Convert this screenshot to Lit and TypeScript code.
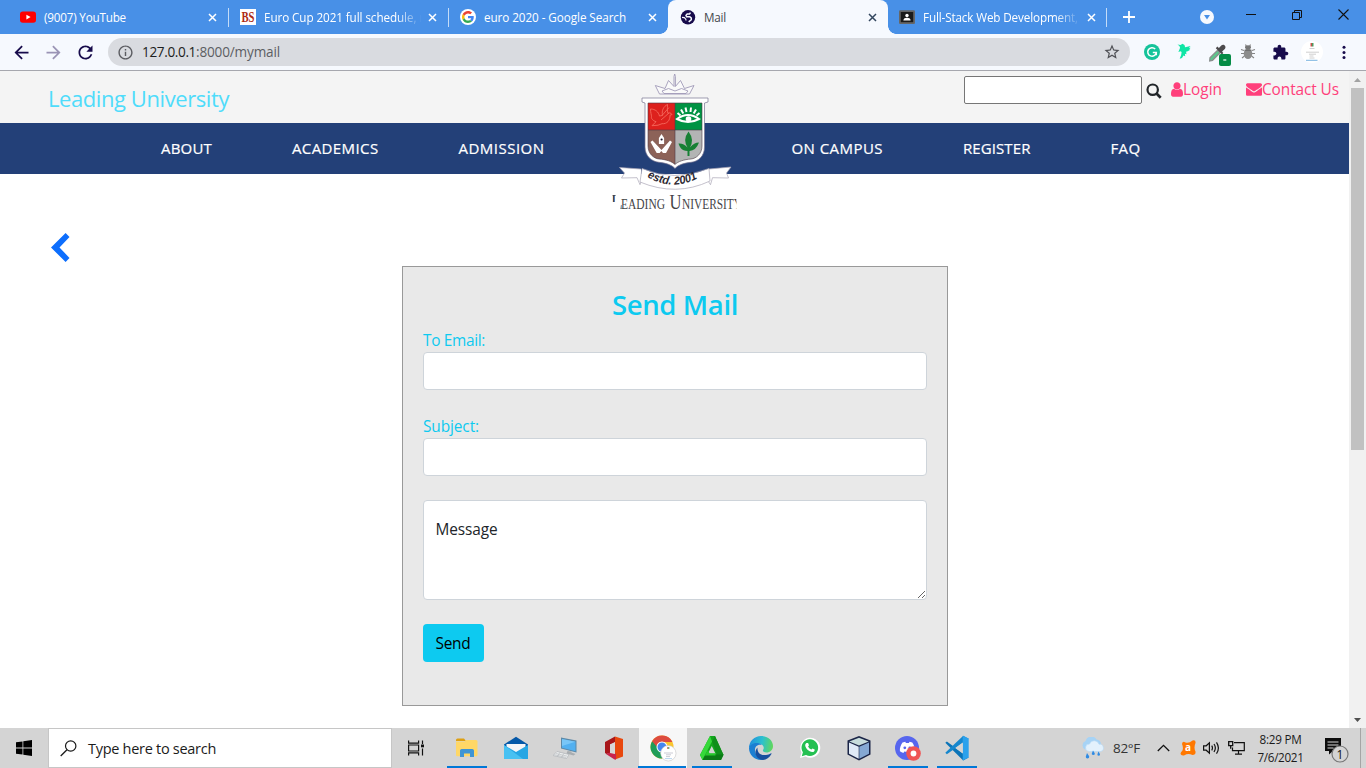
import { LitElement, html, svg, css } from "lit";
import { customElement, property } from "lit/decorators.js";

/** Single-line label whose tracking is adjusted so that it spans `w` pixels. */
@customElement("fit-label")
class FitLabel extends LitElement {
  @property() text = "";
  @property({ type: Number }) w = 0;

  static styles = css`
    :host { display: inline-block; white-space: pre; }
    .t { display: inline-block; }
  `;

  updated() {
    const el = this.renderRoot.querySelector(".t") as HTMLElement;
    el.style.letterSpacing = "0px";
    if (this.w) {
      const natural = el.getBoundingClientRect().width;
      el.style.letterSpacing = `${(this.w - natural) / this.text.length}px`;
    }
  }

  render() {
    return html`<span class="t">${this.text}</span>`;
  }
}

const icon = (w: number, h: number, box: string, body: unknown) =>
  html`<svg width=${w} height=${h} viewBox=${box} fill="none">${body}</svg>`;

const closeX = (c: string) =>
  icon(9, 9, "0 0 9 9", svg`<path d="M1 1l7 7M8 1l-7 7" stroke=${c} stroke-width="1.5"/>`);

/* ---------- tab icons ---------- */
const youtube = icon(16, 16, "0 0 16 16", svg`
  <rect x="0" y="2.4" width="16" height="11.4" rx="2.8" fill="#f00"/>
  <path d="M6.4 5.7l4.2 2.4-4.2 2.4z" fill="#fff"/>`);
const bs = icon(16, 16, "0 0 16 16", svg`
  <rect width="16" height="16" fill="#fff"/>
  <text x="8" y="13" text-anchor="middle" textLength="13" lengthAdjust="spacingAndGlyphs" font-family="Liberation Serif, serif" font-weight="700" font-size="14" fill="#ad2a14">BS</text>`);
const google = icon(16, 16, "0 0 48 48", svg`
  <circle cx="24" cy="24" r="24" fill="#fff"/>
  <g transform="translate(6 6) scale(.75)">
  <path fill="#EA4335" d="M24 9.5c3.54 0 6.71 1.22 9.21 3.6l6.85-6.85C35.9 2.38 30.47 0 24 0 14.62 0 6.51 5.38 2.56 13.22l7.98 6.19C12.43 13.72 17.74 9.5 24 9.5z"/>
  <path fill="#4285F4" d="M46.98 24.55c0-1.57-.15-3.09-.38-4.55H24v9.02h12.94c-.58 2.96-2.26 5.48-4.78 7.18l7.73 6c4.51-4.18 7.09-10.36 7.09-17.65z"/>
  <path fill="#FBBC05" d="M10.53 28.59c-.48-1.45-.76-2.99-.76-4.59s.27-3.14.76-4.59l-7.98-6.19C.92 16.46 0 20.12 0 24c0 3.88.92 7.54 2.56 10.78l7.97-6.19z"/>
  <path fill="#34A853" d="M24 48c6.48 0 11.93-2.13 15.89-5.81l-7.73-6c-2.15 1.45-4.92 2.3-8.16 2.3-6.26 0-11.57-4.22-13.47-9.91l-7.98 6.19C6.51 42.62 14.62 48 24 48z"/></g>`);
const globe = icon(16, 16, "0 0 16 16", svg`
  <circle cx="8" cy="8.3" r="7.2" fill="#170b4b"/>
  <path d="M10.500 3.600L9.500 5H7.200L6 6.300l.6 1.400h3.200l1.500 1.400v1.600l-2.600 2.200" stroke="#f6f9fe" stroke-width="1.500"/>
  <path d="M2 8.300l2.300.3 1.500 1.600.2 1.300" stroke="#f6f9fe" stroke-width="1.200"/>`);
const classroom = icon(16, 16, "0 0 16 16", svg`
  <rect x="0" y="1.3" width="16" height="13.7" rx="1.3" fill="#666"/>
  <rect x="1.8" y="3" width="12.4" height="10.2" fill="#1b1b1b"/>
  <circle cx="8" cy="6.5" r="1.7" fill="#fff"/><path d="M4.4 11.6c0-2.1 1.7-2.8 3.6-2.8s3.6.7 3.6 2.8z" fill="#fff"/>`);

/* ---------- toolbar icons ---------- */
const NAVY = "#170b4b";
const mat = (d: string, c: string, s = 20) =>
  icon(s, s, "0 0 24 24", svg`<path d=${d} fill=${c}/>`);
const backArrow = mat("M20 11H7.83l5.59-5.59L12 4l-8 8 8 8 1.41-1.41L7.83 13H20v-2z", NAVY, 21);
const fwdArrow = mat("M12 4l-1.41 1.41L16.17 11H4v2h12.17l-5.58 5.59L12 20l8-8z", "#9a94b5", 21);
const reload = mat("M17.65 6.35C16.2 4.9 14.21 4 12 4c-4.42 0-7.99 3.58-7.99 8s3.57 8 7.99 8c3.73 0 6.84-2.55 7.73-6h-2.08c-.82 2.33-3.04 4-5.65 4-3.31 0-6-2.69-6-6s2.69-6 6-6c1.66 0 3.14.69 4.22 1.78L13 11h7V4l-2.35 2.35z", NAVY, 21);
const info = mat("M11 7h2v2h-2zm0 4h2v6h-2zm1-9C6.48 2 2 6.48 2 12s4.48 10 10 10 10-4.48 10-10S17.52 2 12 2zm0 18c-4.41 0-8-3.59-8-8s3.59-8 8-8 8 3.59 8 8-3.59 8-8 8z", "#5b5c61", 17);
const star = mat("M22 9.24l-7.19-.62L12 2 9.19 8.63 2 9.24l5.46 4.73L5.82 21 12 17.27 18.18 21l-1.63-7.03L22 9.24zM12 15.4l-3.76 2.27 1-4.28-3.32-2.88 4.38-.38L12 6.1l1.71 4.04 4.38.38-3.32 2.88 1 4.28L12 15.4z", "#4f5055", 18);
const puzzle = mat("M20.5 11H19V7c0-1.1-.9-2-2-2h-4V3.5C13 2.12 11.88 1 10.5 1S8 2.12 8 3.5V5H4c-1.1 0-1.99.9-1.99 2v3.8H3.5c1.49 0 2.7 1.21 2.7 2.7s-1.21 2.7-2.7 2.7H2V20c0 1.1.9 2 2 2h3.8v-1.5c0-1.49 1.21-2.7 2.7-2.7 1.49 0 2.7 1.21 2.7 2.7V22H17c1.1 0 2-.9 2-2v-4h1.5c1.38 0 2.5-1.12 2.5-2.5S21.88 11 20.5 11z", NAVY, 17);
const grammarly = icon(16, 16, "0 0 16 16", svg`
  <circle cx="8" cy="8" r="8" fill="#15c39a"/>
  <path d="M11.2 5a4.3 4.3 0 1 0 1.1 3.6H8.8M12.3 8.6v2.7" stroke="#fff" stroke-width="1.5"/>`);
const bird = icon(16, 18, "0 0 16 18", svg`
  <path d="M1.500 1.500l3 .5L6.500 .8l2 1.200 .6 2.300L14.500 3l-1.600 2 1.700-.3-1.500 1.900 1.200 .1-2.600 1.600-1.600 .4 .4 2.600-1.600-.6 .3 2.600-1.700-.9-1.500 2.600-2.300 .8 1.500-3.700 .4-3L4.500 8.300l-2.100 .6 1.700-4.200L3.400 3z" fill="#10e5a5"/>`);
const dropper = icon(26, 24, "0 0 26 24", svg`
  <path d="M5 15.800L12.500 8.300l2.500 2.500-7.500 7.500-2.800 .7z" fill="#5cc88d" stroke="#8a8f8e" stroke-width="1.300"/>
  <path d="M10.800 6.200l6.200 6.200 1.300-1.500-1.200-1.300 2.700-2.700c2.200-2.400-1.200-5.600-3.500-3.400L13.900 6l-1.600-1.400z" fill="#4d4b4d"/>
  <rect x="14" y="12" width="12" height="12" rx="2" fill="#058c46"/>
  <path d="M18.300 18h3" stroke="#fff" stroke-width="1.200"/>`);
const bug = icon(16, 18, "0 0 16 18", svg`
  <path d="M1 6.500l3 1M1 10.500h3M2 15l2.500-2M15 6.500l-3 1M15 10.500h-3M14 15l-2.500-2M5.500 1.500l1 2M10.500 1.500l-1 2" stroke="#858585" stroke-width="1.1"/>
  <ellipse cx="8" cy="10.700" rx="4.300" ry="5.200" fill="#8c8c8c"/><ellipse cx="8" cy="4.300" rx="3" ry="2" fill="#777"/>
  <path d="M4.500 7.200h7" stroke="#666"/>`);
const avatar = icon(22, 22, "0 0 22 22", svg`
  <circle cx="11" cy="11" r="11" fill="#fff"/>
  <path d="M9.500 2h1.600v3.500H9.500z" fill="#c8504a"/><path d="M11 2h1.500v3.500H11z" fill="#4b9c62"/>
  <path d="M8.500 7.500h5M5 11.200h13M8 13.200h7M8.500 15h4M8.500 17h5" stroke="#c4c4c4" stroke-width=".8"/>
  <path d="M5 19.300h11.500" stroke="#78b3e0"/>`);
const dots = icon(4, 16, "0 0 4 16", svg`<g fill=${NAVY}><circle cx="2" cy="3.2" r="1.5"/><circle cx="2" cy="8.4" r="1.5"/><circle cx="2" cy="13.600" r="1.5"/></g>`);

/* ---------- site icons ---------- */
const magnifier = icon(16, 16, "0 0 16 16", svg`<circle cx="6.7" cy="6.7" r="5.2" stroke="#212529" stroke-width="2.2"/><path d="M10.500 10.500l4.200 4.200" stroke="#212529" stroke-width="2.7"/>`);
const user = icon(12, 15, "0 100 1280 1600", svg`<path fill="#ff3f7b" d="M1280 1399q0 109-62.5 187t-150.5 78h-854q-88 0-150.5-78t-62.5-187q0-85 8.5-160.5t31.5-152 58.5-131 94-89 134.5-34.5q131 128 313 128t313-128q76 0 134.5 34.5t94 89 58.5 131 31.5 152 8.5 160.5zm-256-887q0 159-112.5 271.5t-271.5 112.5-271.5-112.5-112.5-271.5 112.5-271.5 271.5-112.5 271.5 112.5 112.5 271.5z"/>`);
const envelope = icon(16, 16, "0 0 1792 1792", svg`<path fill="#ff3f7b" d="M1792 710v794q0 66-47 113t-113 47h-1472q-66 0-113-47t-47-113v-794q44 49 101 87 362 246 497 345 57 42 92.5 65.5t94.5 48 110 24.5h2q51 0 110-24.5t94.5-48 92.5-65.5q170-123 498-345 57-39 100-87zm0-294q0 79-49 151t-122 123q-376 261-468 325-10 7-42.5 31t-54 38.5-52 32.5-57.5 27-50 9h-2q-23 0-50-9t-57.5-27-52-32.5-54-38.5-42.5-31q-91-64-262-182.5t-205-142.5q-62-42-117-115.5t-55-136.5q0-78 41.5-130t118.5-52h1472q65 0 112.500 47t47.500 113z"/>`);
const chevron = icon(19, 29, "0 0 19 29", svg`<path d="M14.600 0L18.500 4.100 8.500 14.500 18.500 24.900 14.600 29 0 14.500z" fill="#0d6efd"/>`);

const crest = icon(150, 150, "0 0 150 150", svg`
  <defs>
    <clipPath id="name"><path d="M12.500 127h3.200v9h-3.200zM20.500 124h116v24h-116z"/></clipPath>
    <clipPath id="shield"><path d="M48 37h54v43c0 8-6 12.500-11 13-7 .5-13 2.500-16 5.500-3-3-9-5-16-5.500-5-.5-11-5-11-13z"/></clipPath>
    <path id="arc" d="M47 111q27 15.500 54-.5"/>
  </defs>
  <path d="M59.500 28l-4.200-8.500 9.700 3 3.500-8 5.500 6V10.500L74.700 8l.7 2.500V20.500l5.100-6 4 8 9.500-3-4.500 8.500zM62 25l6.500-2.500L75 25l6.500-2.500L88 25l-2 2.500H64z" fill="#fafafa" stroke="#a09ab8" stroke-width=".9"/>
  <path d="M42 32h66v4l-3.500 1V81c0 9-6 14.500-13.500 15.300-7 .7-13 2.700-16 6.200-3-3.500-9-5.500-16-6.200C51.500 95.500 45 90 45 81V37l-3-1z" fill="#fff" stroke="#77738f" stroke-width=".7"/>
  <g clip-path="url(#shield)">
    <path d="M48 36h27v28H48z" fill="#dd211d"/><path d="M75 36h28v28H75z" fill="#009343"/>
    <path d="M48 64h27v36H48z" fill="#8c6258"/><path d="M75 64h28v36H75z" fill="#b3b4b4"/>
  </g>
  <path d="M48 37h54v43c0 8-6 12.500-11 13-7 .5-13 2.500-16 5.500-3-3-9-5-16-5.500-5-.5-11-5-11-13zM75 37v61M48 64h54" stroke="#4e3b46" stroke-width=".6"/>
  <path d="M50.500 43c5 0 8 3 9 7l3-.5c-1-5 1-9 5-11 0 4-.5 7 .5 9 .7-1 3-1 4 1l-2 .7c.3 5-3 9-8 8.500l-4 1.500-6 .5 4-4c-3-1-5-3-4.500-5 0-2-1-4-1-7.700zM62 49.500l7-8M61 54l8-7" stroke="#f4695c" stroke-width=".9"/>
  <path d="M77 53q11-8 22 0-11 6-22 0z" stroke="#fff" stroke-width="2"/><circle cx="88.500" cy="53" r="2.800" fill="#fff"/>
  <path d="M77.500 47l3 2.500M81 43.500l2.300 4M85.500 41.500l1 4.500M91 41.500l-.5 4.500M96 43.500l-2.300 4M99.500 47l-3 2.500" stroke="#fff" stroke-width="2"/>
  <path d="M61.500 68l2.600 4v6h-5.200v-6zM50.500 76l2-1.500 9 9.500 8.500-9.500 2 1.500-6 11h-3l-1.700-2-1.600 2h-3z" fill="#fff"/><circle cx="61.600" cy="73.500" r="1.100" fill="#20182a"/>
  <path d="M88.500 65.500q6 8 1.500 16 4-5 9-5-3 8-9.500 8.500V90h-2v-5c-6-.3-8-4-9-7.500q5-.5 9 4-5-8 1-16z" fill="#178034"/>
  <path d="M41 103l-21.500-1.500 5 5.500-3 5 15.500-.3 3 7 1-3M109 103l22-2-4.500 6 2 5-16-.3-2 7-2-3" fill="#fff" stroke="#aaa6b6" stroke-width=".7"/>
  <path d="M42 102.500q32 14 67 0l1 12.500q-34 16-70 1z" fill="#fff" stroke="#aaa6b6" stroke-width=".7"/>
  <text font-family="Liberation Sans, sans-serif" font-size="11.5" font-weight="700" font-style="italic" fill="#2e2a32"><textPath href="#arc" textLength="53" lengthAdjust="spacingAndGlyphs">estd. 2001</textPath></text>
  <g clip-path="url(#name)" font-family="Liberation Serif, serif" fill="#444447">
    <text x="10.500" y="142.700" font-size="20">L</text>
    <text x="21" y="142.700" font-size="15" textLength="44" lengthAdjust="spacingAndGlyphs">EADING</text>
    <text x="69.500" y="142.700" font-size="20" textLength="12" lengthAdjust="spacingAndGlyphs">U</text>
    <text x="82" y="142.700" font-size="15" textLength="60" lengthAdjust="spacingAndGlyphs">NIVERSITY</text>
  </g>`);

/* ---------- taskbar icons ---------- */
const winLogo = icon(16, 16, "0 0 16 16", svg`<path fill="#000" d="M0 2.300l6.500-.9v6.200H0zM7.300 1.300L16 0v7.600H7.300zM0 8.400h6.500v6.200L0 13.700zM7.300 8.400H16V16l-8.700-1.300z"/>`);
const loupe = icon(17, 17, "0 0 17 17", svg`<circle cx="10.7" cy="6" r="5.200" stroke="#1a1a1a" stroke-width="1.200"/><path d="M7 9.700L.7 16" stroke="#1a1a1a" stroke-width="1.300"/>`);
const taskView = icon(17, 16, "0 0 17 16", svg`<path d="M.6 .5v2.700h10V.5M.6 15.500v-2.700h10v2.700M.6 5h10v6H.6zM14.500 .5v3.500M14.500 8.500v7" stroke="#111" stroke-width="1.200"/><rect x="13" y="4.500" width="3" height="2.800" fill="#111"/>`);
const explorer = icon(24, 24, "0 0 24 24", svg`
  <path d="M1 4a1.500 1.500 0 0 1 1.500-1.500H9L11 5H1z" fill="#dea012"/><path d="M1 5.500h8.500l1.500-1.500h10a1.500 1.500 0 0 1 1.500 1.500V19a1.200 1.200 0 0 1-1.200 1.200H2.200A1.200 1.200 0 0 1 1 19z" fill="#ffd766"/>
  <path d="M5 21v-6.500A1.700 1.700 0 0 1 6.700 13h10.600a1.700 1.700 0 0 1 1.700 1.500V21h-4v-3.500H9V21z" fill="#3f95d4"/>`);
const mailApp = icon(26, 24, "0 0 26 24", svg`
  <path d="M1 8.500L13 .7l12 7.800v3L13 17 1 11z" fill="#0558a8"/><path d="M3.500 8h19v5L13 18l-9.500-5z" fill="#f5f5f7"/>
  <path d="M1 9l12 7 12-7v14H1z" fill="#26a6e4"/><path d="M1 23V9l19 14z" fill="#48c1f2"/>`);
const remote = icon(24, 24, "0 0 24 24", svg`
  <path d="M8 1.500l15.500 3v12L8 12.500z" fill="#5c89a8"/><path d="M9 3l13.500 2.700v9.500L9 11.800z" fill="#52b0f0"/><path d="M9 3l13.500 2.700L9 10z" fill="#78c6f7"/>
  <path d="M14.500 15l-1 2.500 7 2 2-1.500-4-1.500v-1z" fill="#a8adb1"/><path d="M4 15.500l12 3-2.500 4L0 19.500z" fill="#eceeef" stroke="#a8adb1" stroke-width=".6"/><path d="M3 17.500l11 2.600M1.500 18.700l11.500 2.700M7 16.300l-2.500 4M11 17.300l-2.500 4" stroke="#a8adb1" stroke-width=".5"/>`);
const office = icon(20, 24, "0 0 20 24", svg`
  <path d="M1 6l10-5.500V6L6 8.500V17l-3.500 1L1 17z" fill="#a8161a"/><path d="M11 .5L19 3v17.500L11 23.500z" fill="#e8480e"/><path d="M2 18l4-1.500 6 1.200v5.800h-1.500z" fill="#c9234b"/><path d="M6 8.500L11 6.500V18l-5-1z" fill="#d8d7d7"/>`);
const chrome = icon(28, 28, "0 0 28 28", svg`
  <circle cx="13" cy="13" r="11.500" fill="#fbc52c"/>
  <path d="M3.100 7.200A11.500 11.500 0 0 0 13 24.500l5-8.700-5-2.800z" fill="#1f9d58"/>
  <path d="M3.100 7.200A11.500 11.500 0 0 1 23.500 8H13a5.500 5.500 0 0 0-5.400 4.600z" fill="#dd4b3f"/>
  <circle cx="13" cy="13" r="5.500" fill="#fff"/><circle cx="13" cy="13" r="4.500" fill="#4586f0"/>
  <circle cx="19.300" cy="19.300" r="7.700" fill="#fff" stroke="#bbb" stroke-width=".5"/><path d="M18.300 13h1v2h-1z" fill="#c8504a"/><path d="M19.300 13h1v2h-1z" fill="#4b9c62"/>
  <path d="M15 19h9M17 20.800h5M17 22.600h4" stroke="#b4b4c2" stroke-width=".7"/><path d="M16 24.600h7" stroke="#a5c9ea" stroke-width=".8"/>`);
const prism = icon(26, 26, "0 0 26 26", svg`
  <path d="M11 1h5l8.500 19-2.500 5H3.500L1 20z" fill="#13a51d"/><path d="M11 1L1 20l2.500 5L13 6.500z" fill="#35d93a"/><path d="M13 6.500L16 1l8.500 19H18z" fill="#0f8f1a"/>
  <path d="M3.500 25l3-5.500h18L22 25z" fill="#0b7a16"/><path d="M12.800 11l3.700 7.800H8.800z" fill="#d3d5d3"/><path d="M5.800 20.500L9 15l1.500 3.300h6v2.200z" fill="#27c82c"/>`);
const edge = icon(26, 26, "0 0 26 26", svg`
  <defs><linearGradient id="eg" x1="2" y1="8" x2="25" y2="12" gradientUnits="userSpaceOnUse"><stop stop-color="#2292dd"/><stop offset=".5" stop-color="#2bc0cf"/><stop offset="1" stop-color="#63d857"/></linearGradient></defs>
  <path d="M1 13A12 12 0 0 1 13 1c8 0 12 5.500 12 10 0 4-3 6.500-6.500 6.500-3 0-4-1.200-3.500-2.500 2-2.500-.2-6.300-4-6.300-4.500 0-9 2-10 4.300z" fill="url(#eg)"/>
  <path d="M1 13c1-4 5.500-5.500 9-5 1.500.2 3 .9 4 2-5-1-7.300 2-7 5.500.3 4.500 4 8.500 9 9.100-8 1.900-15-4.100-15-11.600z" fill="#1c7fd2"/>
  <path d="M9.500 12.500c-.5 5 3 8 8.500 7.500 2-.2 3.500-.8 4.700-1.500.6-.4 1 0 .7.600-2 3.900-5 5.800-8.400 5.800-6 0-10.300-7-5.500-12.400z" fill="#174f9e"/>`);
const whatsapp = icon(22, 22, "0 0 22 22", svg`
  <path d="M1 21l1.500-5.500A10 10 0 1 1 6.500 19.500z" fill="#fff"/><path d="M2.800 19.200l1.100-4A8.300 8.300 0 1 1 7 18z" fill="#25c052"/>
  <path d="M7.700 6l1.400.1.900 2.200-.9 1.200c.7 1.500 1.900 2.500 3.300 3.100l1.100-1.200 2.200 1.100c.2 1.700-1.200 2.600-2.300 2.600-3.600-.3-6.900-3.600-7.200-6.800 0-1 .6-2 1.500-2.300z" fill="#fff"/>`);
const cube = icon(26, 26, "0 0 26 26", svg`
  <path d="M13 1L24.500 5.500v14L13 25.500 1.500 19.500v-14z" fill="#1b2547"/><path d="M13 2.700l9.700 3.700L13 10.600 3.300 6.400z" fill="#c8dddc"/><path d="M3 7.500l9.700 4.200v12L3 18.800z" fill="#e0eaf7"/><path d="M23 7.500l-9.700 4.200v12l9.700-4.900z" fill="#85a8d3"/>`);
const discord = icon(28, 26, "0 0 28 26", svg`
  <circle cx="13" cy="13" r="12" fill="#5766ee"/>
  <path d="M8.500 7.500l2.800-.7.600 1.200h3l.6-1.200 2.800.7c1.800 2.700 2.700 5.500 2.400 8.700-1.200 1-2.300 1.400-3.500 1.700l-.9-1.500c-2 .5-4 .5-6 0l-.9 1.500c-1.200-.3-2.300-.8-3.500-1.700-.3-3.200.8-6 2.600-8.700z" fill="#fff"/><circle cx="10.800" cy="12.800" r="1.400" fill="#5766ee"/><circle cx="15.800" cy="12.800" r="1.400" fill="#5766ee"/>
  <circle cx="19.500" cy="18.500" r="7.300" fill="#ef5555"/><circle cx="19.500" cy="18.500" r="2.900" fill="#fff"/>`);
const vscode = icon(26, 26, "0 0 100 100", svg`
  <path d="M5 30l6-5 84 62-21 11z" fill="#0b74b8"/><path d="M5 68l6 6 84-60L74 3z" fill="#1687ce"/><path d="M72 3l23 10v74L72 98z" fill="#2ba1ec"/><path d="M72 29v42L43 50z" fill="#d4d4d4"/>`);
const weather = icon(24, 22, "0 0 24 22", svg`
  <path d="M4 12.500A4.700 4.700 0 0 1 4.500 4 6 6 0 0 1 15.500 2.500 5 5 0 0 1 20 7z" fill="#a7d3f5"/>
  <path d="M8 14.500a3.700 3.700 0 0 1 .5-7.400 5 5 0 0 1 9.500 .2 3.600 3.600 0 0 1 1.500 7.200z" fill="#e3f1fc" stroke="#b5d9f5" stroke-width=".6"/>
  <path d="M6 16l2 3a1.700 1.700 0 1 1-3 0zM12 13.500l1.600 2.600a1.400 1.400 0 1 1-2.600 0zM17.500 14.500l1.400 2.400a1.300 1.300 0 1 1-2.400 0z" fill="#2f8be4"/>`);
const trayUp = icon(13, 8, "0 0 13 8", svg`<path d="M.8 7l5.700-5.700L12.200 7" stroke="#111" stroke-width="1.3"/>`);
const avast = icon(16, 16, "0 0 16 16", svg`
  <path d="M5.500 2.500q3.500 1 7-2 3.500-1 3 2.500-2 4.500 0 8.500 .5 3.500-3 3.500-4.500-2-8 .3-3.500 .7-4-1.500 0-1.500 2-3.300 1-3-.5-6.500Q2.500 .5 5.500 2.500z" fill="#ff7800"/>
  <text x="8" y="11.300" text-anchor="middle" font-family="Open Sans, sans-serif" font-size="10" font-weight="700" fill="#fff">a</text>`);
const speaker = icon(17, 14, "0 0 17 14", svg`<path d="M.6 4.800h2.600l3.200-3v10.400l-3.200-3H.6zM8.700 4.700q1.500 2.300 0 4.600M11 3q2.700 4 0 8M13.500 1.300q3.800 5.700 0 11.400" stroke="#111" stroke-width="1.2"/>`);
const network = icon(17, 14, "0 0 17 14", svg`<path d="M6 1.700h10.300v8H4.500V6.500M10.500 10v2.800M7 13.200h7" stroke="#111" stroke-width="1.2"/><path d="M.7 .7h4v4h-4zM2.700 4.700v3" stroke="#111" stroke-width="1.3"/>`);
const notify = icon(25, 26, "0 0 25 26", svg`
  <path d="M1 1h16v13H9l-4 3.500V14H1z" fill="#0c0c0c"/><path d="M3.500 5h11M3.500 8h11M3.500 11h6" stroke="#d4d4d4" stroke-width="1"/>
  <circle cx="16" cy="17" r="8" fill="#d4d4d4" stroke="#777" stroke-width="1.2"/>
  <text x="16" y="21.500" text-anchor="middle" font-family="Open Sans, sans-serif" font-size="12" fill="#111">1</text>`);

const tabs = [
  { icon: youtube, text: "(9007) YouTube", w: 82, sep: true },
  { icon: bs, text: "Euro Cup 2021 full schedule, r", w: 160, sep: true, fade: true },
  { icon: google, text: "euro 2020 - Google Search", w: 142 },
  { icon: globe, text: "Mail", w: 22, active: true },
  { icon: classroom, text: "Full-Stack Web Development,", w: 155, sep: true, fade: true },
];

const apps = [
  { icon: explorer, open: true }, { icon: mailApp }, { icon: remote }, { icon: office },
  { icon: chrome, open: true, active: true }, { icon: prism, open: true }, { icon: edge },
  { icon: whatsapp }, { icon: cube }, { icon: discord, open: true }, { icon: vscode, open: true },
];

@customElement("browser-chrome")
class BrowserChrome extends LitElement {
  static styles = css`
    :host { display: block; font: 11.7px "Open Sans", "Noto Sans", sans-serif; }
    svg { display: block; flex: none; }
    .strip { display: flex; height: 34px; background: #4890e7; padding-left: 8px; }
    .tab { display: flex; align-items: center; box-sizing: border-box; width: 220px; padding: 0 11px 0 12px; color: #fff; position: relative; }
    .tab.sep::after { content: ""; position: absolute; right: -1px; top: 8px; width: 1px; height: 19px; background: #c4dcf8; }
    .tab.last { padding: 0 12px 0 11px; }
    .tab.last::after { right: 1px; }
    .tab.active { background: #f6f9fe; color: #45484d; border-radius: 8px 8px 0 0; }
    .tab.active::before, .tab.active::after { content: ""; position: absolute; bottom: 0; width: 8px; height: 8px; }
    .tab.active::before { left: -8px; background: radial-gradient(circle at 0 0, transparent 7.5px, #f6f9fe 8px); }
    .tab.active::after { right: -8px; background: radial-gradient(circle at 100% 0, transparent 7.5px, #f6f9fe 8px); }
    .label { flex: 1; margin: 0 3px 0 8px; height: 18px; line-height: 18px; white-space: nowrap; }
    .fade { -webkit-mask-image: linear-gradient(90deg, #000 82%, transparent 98%); }
    .plus { display: flex; align-items: center; padding-left: 15px; flex: 1; }
    .drop { display: flex; align-items: center; width: 28px; }
    .ctl { display: flex; align-items: center; justify-content: center; width: 46px; height: 29px; }
    .bar { display: flex; align-items: center; height: 36px; background: #f6f9fe; padding: 0 6px; border-bottom: 1px solid #a6a7ae; }
    .cell { display: flex; align-items: center; justify-content: center; width: 32px; height: 36px; flex: none; }
    .nav { padding-right: 1px; box-sizing: border-box; }
    .drp { padding: 4px 0 0 3px; box-sizing: border-box; }
    .omni { display: flex; align-items: center; flex: 1; height: 28px; margin: 0 6px; padding: 0 9px; border-radius: 14px; background: #d9dbe0; font-size: 13.6px; color: #5c5e63; }
    .url { flex: 1; padding-left: 8px; line-height: 28px; }
    .host { color: #1d1e21; }
  `;
  render() {
    return html`
      <div class="strip">
        ${tabs.map((t, i) => html`<div class="tab ${t.active ? "active" : ""} ${t.sep ? "sep" : ""} ${i === 4 ? "last" : ""}">
          ${t.icon}<div class="label ${t.fade ? "fade" : ""}"><fit-label .text=${t.text} .w=${t.w}></fit-label></div>
          ${closeX(t.active ? "#33475f" : "#fff")}</div>`)}
        <div class="plus">${icon(12, 12, "0 0 12 12", svg`<path d="M6 0v12M0 6h12" stroke="#fff" stroke-width="1.8"/>`)}</div>
        <div class="drop">${icon(14, 14, "0 0 14 14", svg`<circle cx="7" cy="7" r="7" fill="#f6f9fe"/><path d="M4 5h6l-3 4.500z" fill="#4890e7"/>`)}</div>
        <div class="ctl">${icon(10, 10, "0 0 10 10", svg`<path d="M0 4.500h10" stroke="#111"/>`)}</div>
        <div class="ctl">${icon(10, 10, "0 0 10 10", svg`<path d="M.5 2.500h7v7h-7zM2.500 2.500v-2h7v7h-2" stroke="#111"/>`)}</div>
        <div class="ctl">${icon(11, 11, "0 0 11 11", svg`<path d="M.5 .5l10 10M10.500 .5l-10 10" stroke="#111" stroke-width="1.1"/>`)}</div>
      </div>
      <div class="bar">
        <div class="cell nav">${backArrow}</div><div class="cell nav">${fwdArrow}</div><div class="cell nav">${reload}</div>
        <div class="omni">${info}<div class="url"><fit-label class="host" .text=${"127.0.0.1"} .w=${54}></fit-label><fit-label .text=${":8000/mymail"} .w=${84}></fit-label></div>${star}</div>
        <div class="cell">${grammarly}</div><div class="cell">${bird}</div><div class="cell drp">${dropper}</div>
        <div class="cell">${bug}</div><div class="cell">${puzzle}</div><div class="cell">${avatar}</div><div class="cell">${dots}</div>
      </div>`;
  }
}

@customElement("mail-page")
class MailPage extends LitElement {
  static styles = css`
    :host { display: flex; flex: 1; min-height: 0; background: #fff; font: 15.4px/24px "Open Sans", "Noto Sans", sans-serif; color: #212529; }
    svg { display: block; flex: none; }
    .page { flex: 1; position: relative; }
    .top { display: flex; align-items: flex-start; height: 52px; background: #f4f4f4; padding-left: 48px; box-sizing: border-box; }
    .brand { flex: 1; font-size: 22px; line-height: 30px; padding-top: 12px; color: #4fdcfb; }
    .search { box-sizing: border-box; width: 178px; height: 28px; margin: 5px 4px 0 0; border: 1px solid #767676; border-radius: 2px; background: #fff; padding: 0; }
    .glass { margin: 12px 9px 0 0; }
    .link { display: flex; align-items: center; height: 24px; margin: 6px 0 0; color: #ff3f7b; line-height: 23px; }
    .login { margin-right: 24px; }
    .contact { margin-right: 10px; }
    .nav { display: flex; gap: 80px; height: 51px; line-height: 51px; background: #234078; color: #fff; padding-left: 161px; font-size: 15px; -webkit-text-stroke: .2px #fff; }
    .slot { width: 87px; }
    .crest { position: absolute; left: 600px; top: -5px; }
    .back { padding: 59px 0 4px 50.500px; }
    .form { box-sizing: border-box; width: 546px; height: 440px; margin-left: 402px; padding: 20px; border: 1px solid #999; background: #e9e9e9; color: #0dcaf0; }
    .title { margin: 0; text-align: center; font-size: 27.500px; line-height: 36px; font-weight: 600; height: 41px; }
    .lbl { display: block; height: 24px; line-height: 26px; }
    .field { display: block; box-sizing: border-box; width: 100%; height: 38px; border: 1px solid #ced4da; border-radius: 4px; background: #fff; margin: 0 0 24px; padding: 6px 12px; }
    .area { position: relative; }
    .area .field { height: 100px; resize: vertical; }
    .area .ph { position: absolute; left: 12.500px; top: 18px; color: #212529; }
    .send { display: flex; align-items: center; justify-content: center; width: 61px; height: 38px; padding: 1px 1px 0 0; border: 0; border-radius: 4px; background: #0dcaf0; color: #000; font: inherit; }
    .scroll { display: flex; flex-direction: column; align-items: center; width: 17px; background: #f1f1f1; }
    .thumb { width: 13px; height: 362px; background: #c1c1c1; }
    .arr { display: flex; align-items: center; justify-content: center; height: 17px; }
    .grow { flex: 1; }
  `;
  item(text: string, w: number) {
    return html`<fit-label .text=${text} .w=${w}></fit-label>`;
  }
  render() {
    return html`
      <div class="page">
        <div class="top">
          <div class="brand">${this.item("Leading University", 181)}</div>
          <input class="search" /><div class="glass">${magnifier}</div>
          <div class="link login">${user}${this.item("Login", 39)}</div>
          <div class="link contact">${envelope}${this.item("Contact Us", 77)}</div>
        </div>
        <div class="nav">
          ${this.item("ABOUT", 51)}${this.item("ACADEMICS", 86.5)}${this.item("ADMISSION", 86)}
          <span class="slot"></span>
          ${this.item("ON CAMPUS", 91.5)}${this.item("REGISTER", 67.5)}${this.item("FAQ", 30)}
        </div>
        <div class="crest">${crest}</div>
        <div class="back">${chevron}</div>
        <div class="form">
          <h3 class="title">${this.item("Send Mail", 126)}</h3>
          <label class="lbl">${this.item("To Email:", 62)}</label><input class="field" />
          <label class="lbl">${this.item("Subject:", 56)}</label><input class="field" />
          <div class="area"><textarea class="field"></textarea><fit-label class="ph" .text=${"Message"} .w=${62}></fit-label></div>
          <button class="send">${this.item("Send", 35)}</button>
        </div>
      </div>
      <div class="scroll">
        <div class="arr">${icon(7, 4, "0 0 7 4", svg`<path d="M3.500 0L7 4H0z" fill="#a3a3a3"/>`)}</div>
        <div class="thumb"></div><div class="grow"></div>
        <div class="arr">${icon(7, 4, "0 0 7 4", svg`<path d="M0 0h7L3.500 4z" fill="#505050"/>`)}</div>
      </div>`;
  }
}

@customElement("task-bar")
class TaskBar extends LitElement {
  static styles = css`
    :host { display: flex; height: 40px; background: #d4d4d4; font: 14.5px "Open Sans", "Noto Sans", sans-serif; color: #1b1b1b; }
    svg { display: block; flex: none; }
    .start { display: flex; align-items: center; justify-content: center; width: 48px; }
    .find { display: flex; align-items: center; box-sizing: border-box; width: 344px; background: #fff; border: 1px solid #c6c6c6; padding-left: 11px; gap: 11px; }
    .tv { display: flex; align-items: center; justify-content: center; width: 50px; padding-right: 2px; box-sizing: border-box; }
    .apps { display: flex; }
    .app { position: relative; display: flex; align-items: center; justify-content: center; width: 49px; }
    .app.active { background: linear-gradient(#f7f7f7, #f7f7f7) center / 48px 100% no-repeat; }
    .app.open::after { content: ""; position: absolute; left: 4.500px; right: 4.500px; bottom: 0; height: 2px; background: #0078d7; }
    .app.active::after { left: 0; right: 1px; }
    .tray { display: flex; align-items: center; flex: 1; justify-content: flex-end; }
    .temp { margin: 0 17px 0 8px; font-size: 13.5px; color: #333; }
    .up { margin-right: 10px; }
    .av { margin-right: 7px; }
    .spk { margin-right: 8px; }
    .clock { display: flex; flex-direction: column; align-items: center; margin: 0 0 0 12px; width: 47px; font-size: 11.7px; line-height: 18px; }
    .note { margin: 4px 11px 0 20px; }
    .edge { width: 5px; height: 40px; border-left: 1px solid #a5a5a5; }
  `;
  render() {
    return html`
      <div class="start">${winLogo}</div>
      <div class="find">${loupe}<fit-label .text=${"Type here to search"} .w=${128}></fit-label></div>
      <div class="tv">${taskView}</div>
      <div class="apps">${apps.map(a => html`<div class="app ${a.open ? "open" : ""} ${a.active ? "active" : ""}">${a.icon}</div>`)}</div>
      <div class="tray">
        ${weather}<fit-label class="temp" .text=${"82°F"} .w=${27}></fit-label>
        <div class="up">${trayUp}</div><div class="av">${avast}</div><div class="spk">${speaker}</div>${network}
        <div class="clock"><fit-label .text=${"8:29 PM"} .w=${42}></fit-label><fit-label .text=${"7/6/2021"} .w=${46}></fit-label></div>
        <div class="note">${notify}</div><div class="edge"></div>
      </div>`;
  }
}

@customElement("app-root")
class AppRoot extends LitElement {
  static styles = css`
    :host { display: flex; flex-direction: column; width: 1366px; height: 768px; overflow: hidden; }
  `;
  render() {
    return html`<browser-chrome></browser-chrome><mail-page></mail-page><task-bar></task-bar>`;
  }
}
